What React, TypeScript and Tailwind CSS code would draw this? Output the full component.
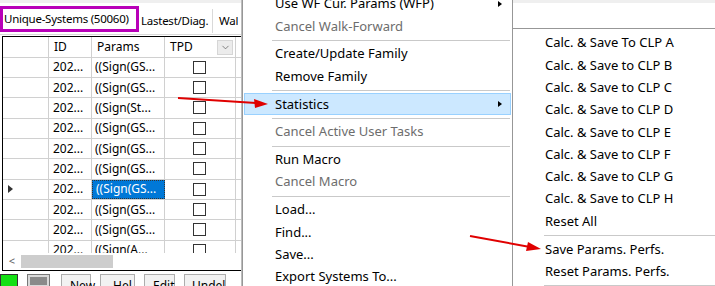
import { ChevronDown } from 'lucide-react'

const rows = [
  'Sign(GS...',
  'Sign(GS...',
  'Sign(St...',
  'Sign(GS...',
  'Sign(GS...',
  'Sign(GS...',
  'Sign(GS...',
  'Sign(GS...',
  'Sign(GS...',
  'Sign(A...',
]

type MenuEntry = { label?: string; disabled?: boolean; sub?: boolean; active?: boolean; sep?: boolean }

const mainMenu: MenuEntry[] = [
  { label: 'Use WF Cur. Params (WFP)', sub: true },
  { label: 'Cancel Walk-Forward', disabled: true },
  { sep: true },
  { label: 'Create/Update Family' },
  { label: 'Remove Family' },
  { sep: true },
  { label: 'Statistics', sub: true, active: true },
  { sep: true },
  { label: 'Cancel Active User Tasks', disabled: true },
  { sep: true },
  { label: 'Run Macro' },
  { label: 'Cancel Macro', disabled: true },
  { sep: true },
  { label: 'Load...' },
  { label: 'Find...' },
  { label: 'Save...' },
  { label: 'Export Systems To...' },
]

const subMenu: MenuEntry[] = [
  { label: 'Calc. & Save To CLP A' },
  { label: 'Calc. & Save to CLP B' },
  { label: 'Calc. & Save to CLP C' },
  { label: 'Calc. & Save to CLP D' },
  { label: 'Calc. & Save to CLP E' },
  { label: 'Calc. & Save to CLP F' },
  { label: 'Calc. & Save to CLP G' },
  { label: 'Calc. & Save to CLP H' },
  { label: 'Reset All' },
  { sep: true },
  { label: 'Save Params. Perfs.' },
  { label: 'Reset Params. Perfs.' },
  { sep: true },
]

function MenuItems({ items, sepInset }: { items: MenuEntry[]; sepInset: string }) {
  return (
    <>
      {items.map((it, i) =>
        it.sep ? (
          <div key={i} className={`h-[5.5px] flex items-center ${sepInset}`}>
            <div className="h-px w-full bg-[#c9c9c9]" />
          </div>
        ) : (
          <div
            key={i}
            className={`relative h-[22.3px] flex items-center pl-[30px] pr-3 border ${
              it.active ? 'bg-[#cce8ff] border-[#99d1ff]' : 'border-transparent'
            } ${it.disabled ? 'text-[#6d6d6d]' : 'text-black'}`}
          >
            <span className="whitespace-nowrap">{it.label}</span>
            {it.sub && (
              <span className="absolute right-[8px] top-1/2 -translate-y-1/2 w-0 h-0 border-y-[3.5px] border-y-transparent border-l-[4px] border-l-black" />
            )}
          </div>
        )
      )}
    </>
  )
}

export default function App() {
  return (
    <div className="relative w-[715px] h-[286px] overflow-hidden bg-white text-black font-['Noto_Sans','Open_Sans',sans-serif]">
      {/* Left window */}
      <div className="w-[242px] h-full flex flex-col border-r border-[#bdbdbd]">
        <div className="h-[3px] bg-[#efefef]" />
        {/* Tabs */}
        <div className="h-[32px] flex items-end text-[11.5px] tracking-[-0.25px] border-b border-[#d9d9d9]">
          <div className="h-[26px] w-[139px] border-[3px] border-[#b800b8] flex items-center pl-[1px] mb-[2px] whitespace-nowrap">
            Unique-Systems (50060)
          </div>
          <div className="h-[24px] w-[74px] flex items-center pl-[2px] border-r border-[#d9d9d9] mb-[1px] whitespace-nowrap">
            Lastest/Diag.
          </div>
          <div className="h-[24px] flex items-center pl-[6px] mb-[1px] overflow-hidden">Wal</div>
        </div>
        {/* Grid */}
        <div className="relative mt-[1px] ml-[2px] h-[238px] border-l border-t border-b border-black overflow-hidden text-[12px]">
          <div className="flex h-[21px] border-b border-[#d0d0d0]">
            <div className="w-[46px] border-r border-[#d0d0d0]" />
            <div className="w-[43px] border-r border-[#d0d0d0] flex items-center pl-[5px]">ID</div>
            <div className="w-[73px] border-r border-[#d0d0d0] flex items-center pl-[5px]">Params</div>
            <div className="w-[71px] border-r border-[#d0d0d0] flex items-center pl-[5px] relative">
              TPD
              <div className="absolute right-[2px] top-[3px] w-[16px] h-[15px] bg-[#ececec] border border-[#d6d6d6] flex items-center justify-center">
                <ChevronDown size={11} strokeWidth={1.5} color="#555" />
              </div>
            </div>
          </div>
          {rows.map((p, i) => (
            <div key={i} className="flex h-[20.33px] border-b border-[#d0d0d0]">
              <div className="w-[46px] border-r border-[#d0d0d0] flex items-center pl-[5px]">
                {i === 6 && (
                  <span className="w-0 h-0 border-y-[4px] border-y-transparent border-l-[5px] border-l-[#333]" />
                )}
              </div>
              <div className="w-[43px] border-r border-[#d0d0d0] flex items-center pl-[4px]">202...</div>
              <div
                className={`w-[73px] border-r flex items-center pl-[3px] ${
                  i === 6 ? 'bg-[#0078d7] text-white border border-dotted border-[#333]' : 'border-[#d0d0d0]'
                }`}
              >
                (({p}
              </div>
              <div className="w-[71px] border-r border-[#d0d0d0] flex items-center justify-center pr-[2px]">
                <div className="w-[13px] h-[13px] border border-[#333] bg-white" />
              </div>
            </div>
          ))}
          {/* Horizontal scrollbar */}
          <div className="absolute left-0 right-0 bottom-0 h-[17px] bg-white flex items-center">
            <span className="w-[18px] text-center text-[11px] text-[#606060]">&lt;</span>
            <div className="w-[92px] h-[13px] bg-[#cdcdcd]" />
          </div>
        </div>
        {/* Toolbar */}
        <div className="mt-[3px] flex items-start gap-[9px] text-[12px] h-[12px] overflow-hidden">
          <div className="w-[18px] h-[14px] bg-[#14e014] border border-[#333]" />
          <div className="w-[23px] h-[14px] bg-[#d9d9d9] border border-[#777] p-[2px]">
            <div className="w-full h-full bg-[#8a8a8a]" />
          </div>
          <div className="ml-[2px] w-[30px] h-[14px] border border-[#adadad] bg-[#f2f2f2] pl-[8px] pt-[5px] leading-none">New</div>
          <div className="w-[35px] h-[14px] border border-[#adadad] bg-[#f2f2f2] pl-[12px] pt-[5px] leading-none">Hel</div>
          <div className="w-[31px] h-[14px] border border-[#adadad] bg-[#f2f2f2] pl-[8px] pt-[5px] leading-none">Edit</div>
          <div className="w-[42px] h-[14px] border border-[#adadad] bg-[#f2f2f2] pl-[7px] pt-[5px] leading-none">Undel</div>
        </div>
      </div>

      {/* Right background window strip */}
      <div className="absolute left-[512px] top-0 right-0 h-[3px] bg-[#efefef]" />

      {/* Context menu */}
      <div className="absolute left-[242px] top-[-11px] w-[271px] pt-[3px] bg-white border border-[#979797] text-[13px] px-[1px]">
        <MenuItems items={mainMenu} sepInset="pl-[28px] pr-[1px]" />
      </div>

      {/* Submenu */}
      <div className="absolute left-[512px] top-[28px] w-[220px] pt-[3px] bg-white border border-[#979797] text-[13px] px-[1px]">
        <MenuItems items={subMenu} sepInset="pl-[30px]" />
      </div>

      {/* Annotation arrows */}
      <svg className="absolute inset-0 pointer-events-none" width="715" height="286">
        <g stroke="#e00000" strokeWidth="2" fill="#e00000">
          <line x1="178" y1="98" x2="256" y2="103" />
          <polygon points="268,104 254,99 255,108" strokeWidth="0" />
          <line x1="470" y1="236" x2="530" y2="247" />
          <polygon points="541,249 528,242 526,251" strokeWidth="0" />
        </g>
      </svg>
    </div>
  )
}
